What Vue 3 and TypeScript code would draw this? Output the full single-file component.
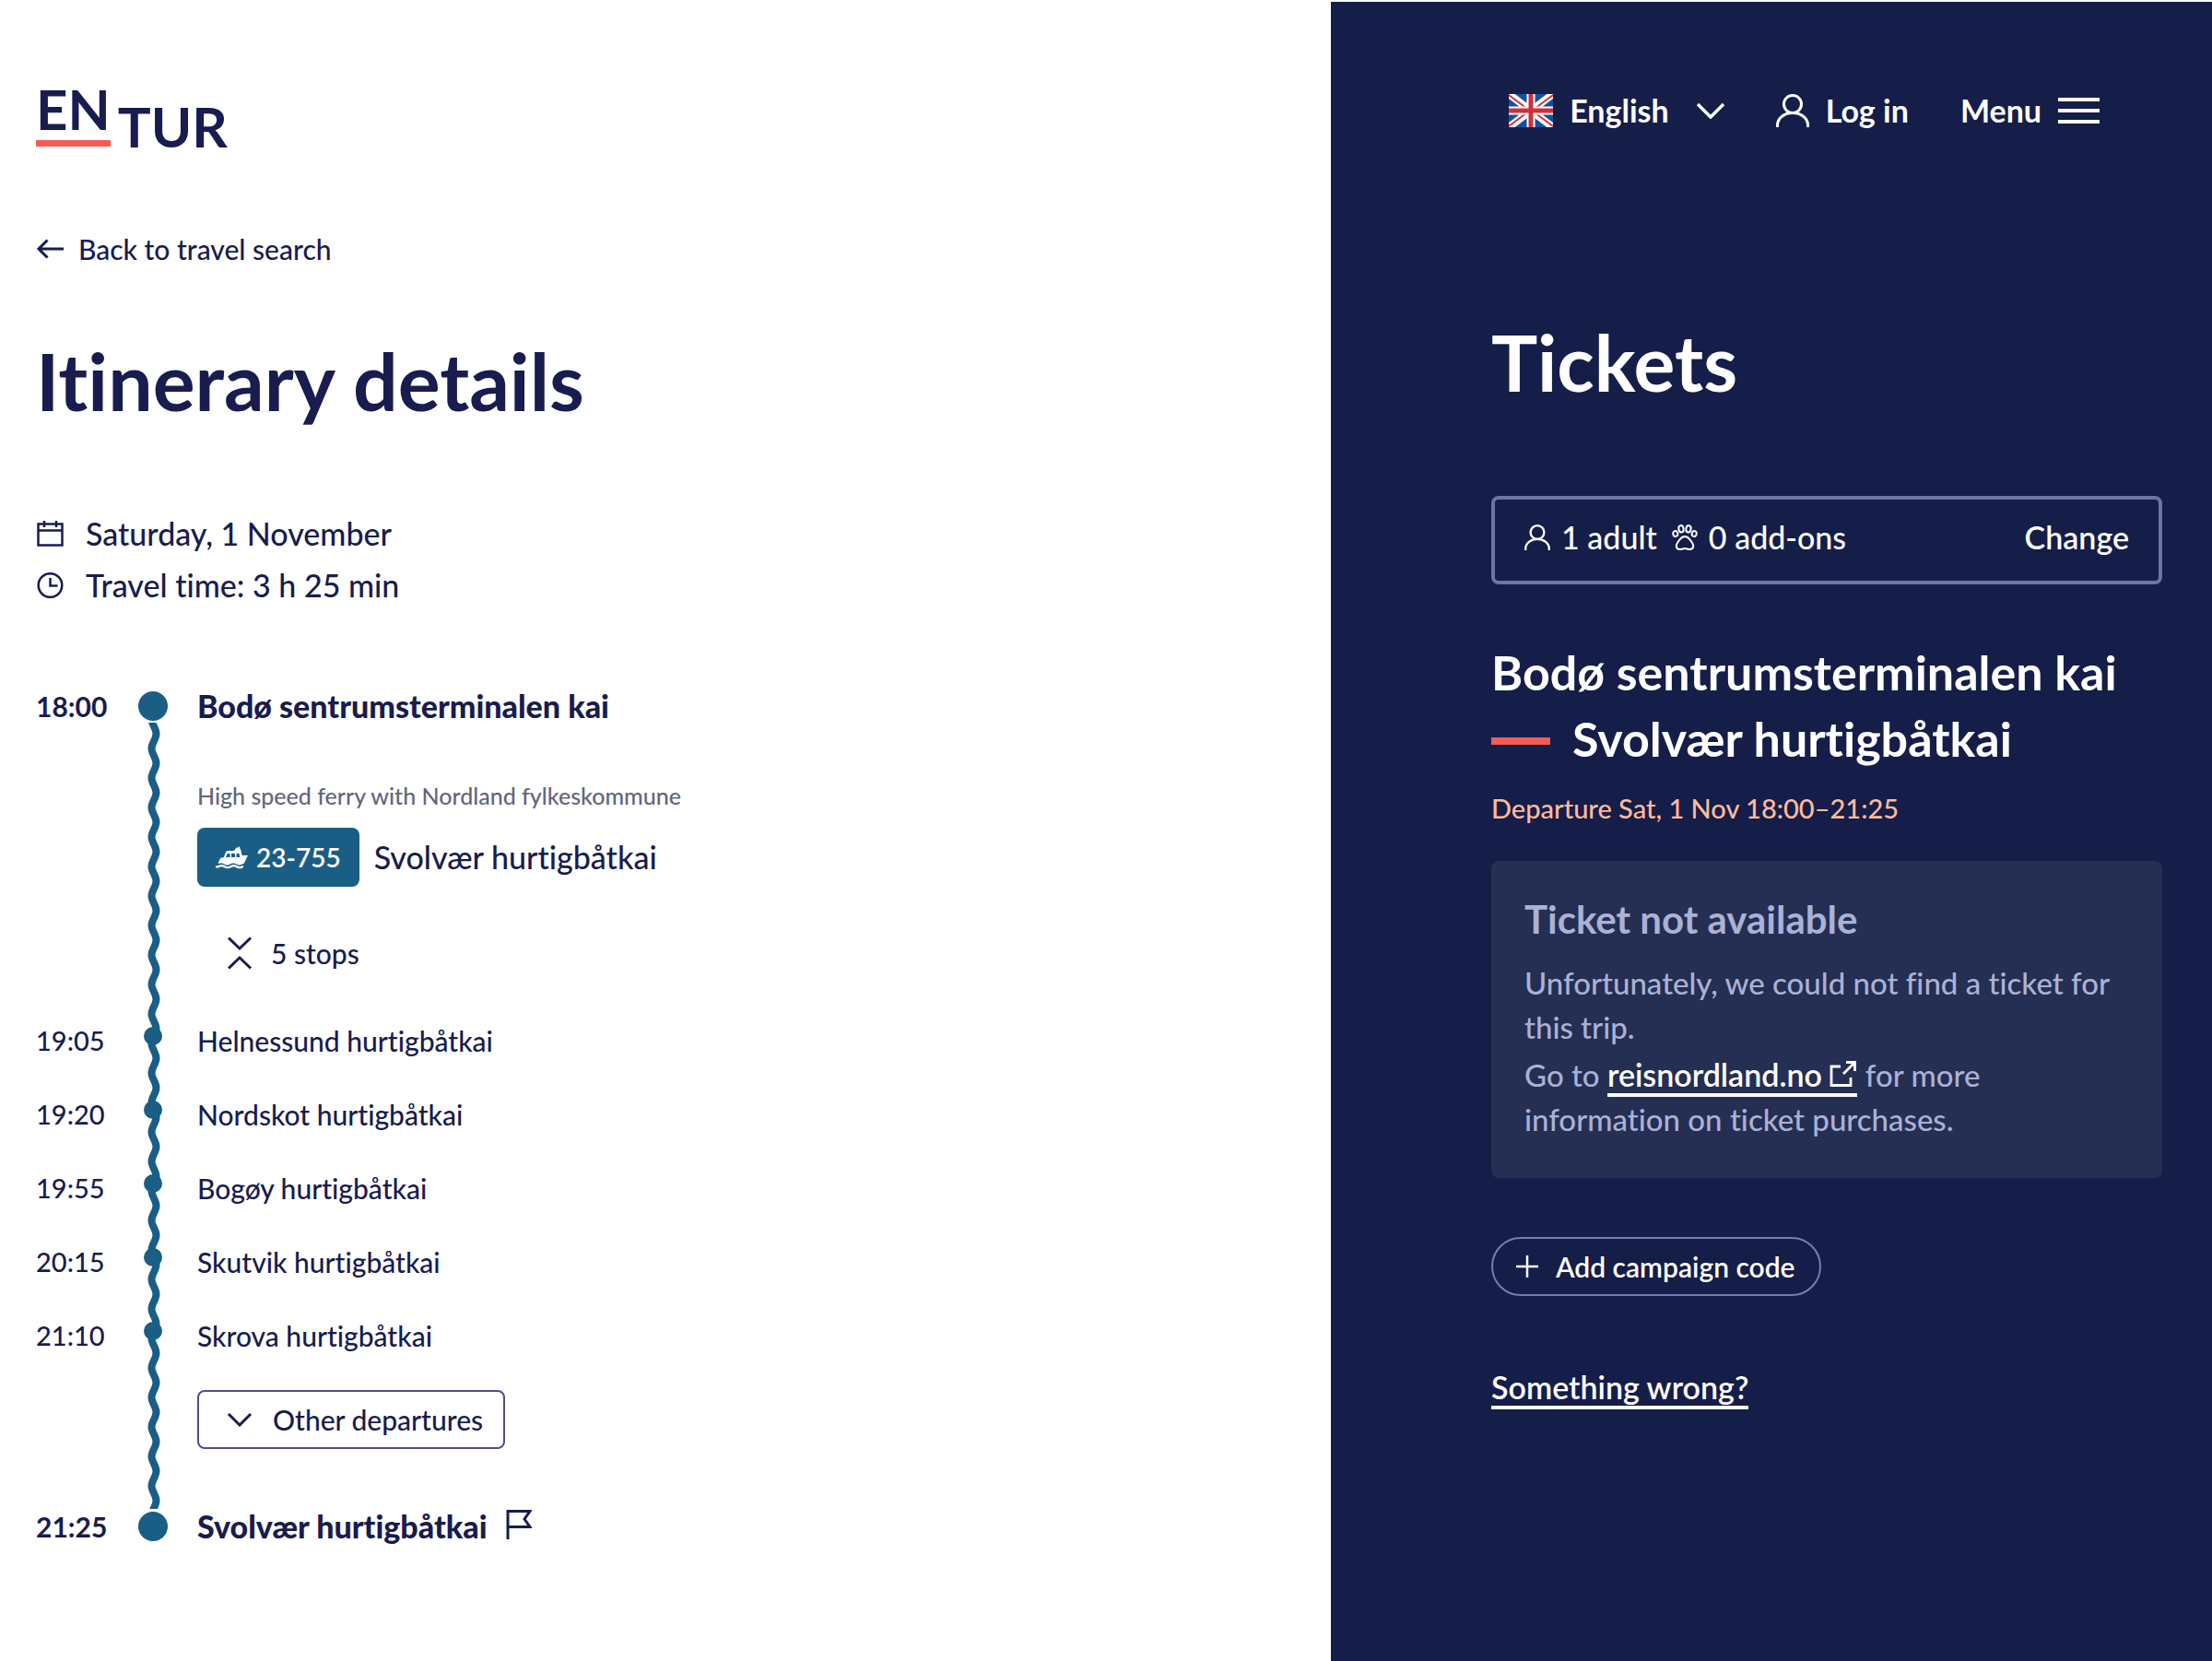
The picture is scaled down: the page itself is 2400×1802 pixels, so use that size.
<script setup lang="ts">
interface Stop {
  time: string
  name: string
}

const stops: Stop[] = [
  { time: '19:05', name: 'Helnessund hurtigbåtkai' },
  { time: '19:20', name: 'Nordskot hurtigbåtkai' },
  { time: '19:55', name: 'Bogøy hurtigbåtkai' },
  { time: '20:15', name: 'Skutvik hurtigbåtkai' },
  { time: '21:10', name: 'Skrova hurtigbåtkai' },
]
</script>

<template>
  <div class="page">
    <main class="itinerary">
      <a class="logo" href="#" aria-label="Entur">
        <span class="logo-en">EN</span><span class="logo-tur">TUR</span>
      </a>

      <a class="back" href="#">
        <svg width="30" height="30" viewBox="0 0 30 30" fill="none" stroke="currentColor" stroke-width="3">
          <path d="M30 15H3M12.500 5.500L3 15l9.500 9.500" />
        </svg>
        Back to travel search
      </a>

      <h1>Itinerary details</h1>

      <ul class="facts">
        <li>
          <svg width="30" height="28" viewBox="0 0 30 28" fill="none" stroke="currentColor" stroke-width="2.500">
            <path d="M2.500 3.500h26v23h-26zM2.500 10.500h26M9 0v7M22 0v7" />
          </svg>
          Saturday, 1 November
        </li>
        <li>
          <svg width="30" height="28" viewBox="0 0 30 28" fill="none" stroke="currentColor" stroke-width="2.500">
            <circle cx="15.500" cy="14" r="12.800" />
            <path d="M15.500 6v8.500h8" />
          </svg>
          Travel time: 3 h 25 min
        </li>
      </ul>

      <section class="leg" aria-label="Ferry">
        <svg class="wave" width="16" height="100%" aria-hidden="true">
          <defs>
            <pattern id="wave" width="16" height="32" patternUnits="userSpaceOnUse">
              <path
                d="M10.500 -20C10.500 -14 5.500 -10 5.500 -4S10.500 6 10.500 12S5.500 22 5.500 28S10.500 38 10.500 44"
                fill="none"
                stroke="#1a5e85"
                stroke-width="8"
              />
            </pattern>
          </defs>
          <rect width="16" height="100%" fill="url(#wave)" />
        </svg>

        <div class="row terminal">
          <time>18:00</time>
          <span class="marker"><i class="dot big"></i></span>
          <strong>Bodø sentrumsterminalen kai</strong>
        </div>

        <div class="ride">
          <p class="operator">High speed ferry with Nordland fylkeskommune</p>
          <div class="line">
            <span class="badge">
              <svg width="36" height="25" viewBox="0 0 36 25" fill="currentColor">
                <path
                  fill-rule="evenodd"
                  d="M2.500 18.500L5.500 12.500h3L11 6.500Q11.500 5 13 5h7l2.500-3.500h2l1-1.500 2 5 1 5H35l-4.500 9c-2 0-2.500 1.500-5 1.500s-3.500-2-6.500-2-3.500 2-6.500 2-3.500-2-6-2-2.500.5-4 0zM12.800 8l-1.600 4h4.300V8zM17 8v4h4V8zM22.500 8v4h3.800l-.8-4z"
                />
                <path
                  d="M0 22c2.500 1.200 3.500-.8 6.500-.8s3.500 2 6.500 2 3.500-2 6.500-2 3.500 2 6 2 3.500-1.200 4.500-1.200"
                  fill="none"
                  stroke="currentColor"
                  stroke-width="2.200"
                />
              </svg>
              23-755
            </span>
            <span class="headsign">Svolvær hurtigbåtkai</span>
          </div>
          <button class="toggle" type="button" aria-expanded="true">
            <svg width="28" height="36" viewBox="0 0 28 36" fill="none" stroke="currentColor" stroke-width="3">
              <path d="M2 1.500L14 13 26 1.500M2 34.500L14 23l12 11.500" />
            </svg>
            5 stops
          </button>
        </div>

        <ol class="stops">
          <li v-for="stop in stops" :key="stop.time" class="row stop">
            <time>{{ stop.time }}</time>
            <span class="marker"><i class="dot"></i></span>
            <span>{{ stop.name }}</span>
          </li>
        </ol>

        <button class="departures" type="button">
          <svg width="28" height="16" viewBox="0 0 28 16" fill="none" stroke="currentColor" stroke-width="3">
            <path d="M2 2l12 12L26 2" />
          </svg>
          Other departures
        </button>

        <div class="row terminal">
          <time>21:25</time>
          <span class="marker"><i class="dot big"></i></span>
          <strong>Svolvær hurtigbåtkai</strong>
          <svg class="flag" width="28" height="36" viewBox="0 0 28 36" fill="none" stroke="currentColor" stroke-width="3">
            <path d="M2 32V1.500h24L20 10l6 8.500H2" />
          </svg>
        </div>
      </section>
    </main>

    <aside class="tickets">
      <nav class="nav">
        <button class="nav-item language" type="button">
          <svg width="48" height="36" viewBox="0 0 48 36">
            <path fill="#1351a0" d="M0 0h48v36H0z" />
            <path stroke="#fff" stroke-width="8" d="M0 0l48 36M48 0L0 36" />
            <path stroke="#d22f34" stroke-width="2" d="M0 1l20 15M48 1L28 16M0 35l20-15M48 35L28 20" />
            <path stroke="#fff" stroke-width="9" d="M24 0v36M0 18h48" />
            <path stroke="#d22f34" stroke-width="5" d="M24 0v36M0 18h48" />
          </svg>
          <span>English</span>
          <svg class="chevron" width="30" height="18" viewBox="0 0 30 18" fill="none" stroke="currentColor" stroke-width="3.500">
            <path d="M1 2l14 14L29 2" />
          </svg>
        </button>
        <a class="nav-item" href="#">
          <svg width="36" height="36" viewBox="0 0 36 36" fill="none" stroke="currentColor" stroke-width="3">
            <circle cx="18" cy="11" r="9.500" />
            <path d="M1.500 36v-2C1.500 26 9 20.500 18 20.500S34.500 26 34.500 34v2" />
          </svg>
          <span>Log in</span>
        </a>
        <button class="nav-item" type="button">
          <span>Menu</span>
          <svg width="45" height="28" viewBox="0 0 45 28" stroke="currentColor" stroke-width="4">
            <path d="M0 2h45M0 14h45M0 26h45" />
          </svg>
        </button>
      </nav>

      <h2 class="title">Tickets</h2>

      <button class="travellers" type="button">
        <svg width="28" height="28" viewBox="0 0 36 36" fill="none" stroke="currentColor" stroke-width="3">
          <circle cx="18" cy="11" r="9.500" />
          <path d="M1.500 36v-2C1.500 26 9 20.500 18 20.500S34.500 26 34.500 34v2" />
        </svg>
        <span class="count">1 adult</span>
        <svg width="28" height="28" viewBox="0 0 28 28" fill="none" stroke="currentColor" stroke-width="2">
          <ellipse cx="10" cy="4.800" rx="2.600" ry="3.700" transform="rotate(-10 10 4.800)" />
          <ellipse cx="18" cy="4.800" rx="2.600" ry="3.700" transform="rotate(10 18 4.800)" />
          <ellipse cx="3.800" cy="10" rx="2.500" ry="3" transform="rotate(-15 3.800 10)" />
          <ellipse cx="24.200" cy="10" rx="2.500" ry="3" transform="rotate(15 24.200 10)" />
          <path d="M14 13c-4 0-5 3-7.500 6-3 4-2 8 2.500 8 2 0 3-1 5-1s3 1 5 1c4.500 0 5.500-4 2.500-8-2.500-3-3.500-6-7.500-6z" />
        </svg>
        <span>0 add-ons</span>
        <span class="change">Change</span>
      </button>

      <h3 class="trip">
        Bodø sentrumsterminalen kai
        <span class="to">Svolvær hurtigbåtkai</span>
      </h3>
      <p class="departure">Departure Sat, 1 Nov 18:00–21:25</p>

      <section class="notice">
        <h4>Ticket not available</h4>
        <p>Unfortunately, we could not find a ticket for this trip.</p>
        <p>
          Go to
          <a href="#">reisnordland.no <svg width="30" height="28" viewBox="0 0 30 28" fill="none" stroke="currentColor" stroke-width="2.800">
            <path d="M12 6H2v20.500h21V18M18 1.500h9.500V11M27.500 1.500L15 14" />
          </svg></a>
          for more information on ticket purchases.
        </p>
      </section>

      <button class="campaign" type="button">
        <svg width="26" height="26" viewBox="0 0 26 26" stroke="currentColor" stroke-width="2.500">
          <path d="M13 1v24M1 13h24" />
        </svg>
        Add campaign code
      </button>

      <a class="help" href="#">Something wrong?</a>
    </aside>
  </div>
</template>

<style>
body {
  margin: 0;
  background: #fff;
}
</style>

<style scoped>
.page {
  display: grid;
  grid-template-columns: 361fr 239fr;
  min-height: 100vh;
  color: #181c4f;
  font: 500 30px/40px Lato, 'Open Sans', sans-serif;
  font-variant-ligatures: none;
}

h1,
h2,
h3,
h4,
p,
ul,
ol {
  margin: 0;
  padding: 0;
}

li {
  list-style: none;
}

a {
  color: inherit;
  text-decoration: none;
}

button {
  background: none;
  border: 0;
  padding: 0;
  color: inherit;
  font: inherit;
  font-variant-ligatures: inherit;
  cursor: pointer;
}

svg {
  flex: none;
}

.itinerary {
  display: flex;
  flex-direction: column;
  align-items: flex-start;
  padding: 98px 39px 0;
}

.logo {
  display: flex;
  gap: 8px;
  height: 62px;
  font-weight: 700;
  font-size: 60px;
  line-height: 40px;
}

.logo-en {
  height: 54px;
  border-bottom: 7px solid #f45b55;
}

.logo-tur {
  padding-top: 19px;
}

.back {
  display: flex;
  align-items: center;
  gap: 16px;
  margin-top: 90px;
}

h1 {
  margin-top: 75px;
  font-weight: 700;
  font-size: 86px;
  line-height: 96px;
}

.facts {
  margin-top: 90px;
  font-size: 34px;
  line-height: 56px;
}

.facts li {
  display: flex;
  align-items: center;
  gap: 24px;
}

.leg {
  position: relative;
  align-self: stretch;
  margin-top: 79px;
}

.wave {
  position: absolute;
  top: 42px;
  left: 120px;
  height: calc(100% - 85px);
}

.row {
  display: flex;
  align-items: center;
}

.row time {
  width: 111px;
}

.marker {
  position: relative;
  display: flex;
  justify-content: center;
  width: 32px;
  margin-right: 32px;
}

.dot {
  width: 20px;
  height: 20px;
  border-radius: 50%;
  background: #1a5e85;
}

.dot.big {
  width: 32px;
  height: 32px;
}

.terminal {
  line-height: 48px;
  font-weight: 700;
}

.terminal strong {
  font-size: 34px;
}

.flag {
  margin-left: 20px;
}

.ride {
  display: flex;
  flex-direction: column;
  align-items: flex-start;
  margin: 57px 0 35px 175px;
}

.operator {
  color: #65657a;
  font-size: 25px;
  line-height: 32px;
}

.line {
  display: flex;
  align-items: center;
  gap: 16px;
  margin: 19px 0 52px;
}

.badge {
  display: flex;
  align-items: center;
  gap: 8px;
  box-sizing: border-box;
  height: 64px;
  padding: 0 20px;
  border-radius: 8px;
  background: #1a5e85;
  color: #fff;
  font-weight: 600;
  font-size: 28px;
}

.headsign {
  font-size: 34px;
}

.toggle {
  display: flex;
  align-items: center;
  gap: 20px;
  padding-left: 32px;
}

.stop {
  height: 80px;
}

.stop time {
  font-size: 29px;
}

.stop .marker {
  padding-bottom: 10px;
}

.departures {
  display: flex;
  align-items: center;
  gap: 22px;
  height: 64px;
  margin: 19px 0 60px 175px;
  padding: 0 22px 0 30px;
  border: 2px solid #4c4f86;
  border-radius: 8px;
}

.tickets {
  display: flex;
  flex-direction: column;
  align-items: flex-start;
  margin-top: 2px;
  padding: 92px 54px 80px 174px;
  background: #151d49;
  color: #fff;
}

.nav {
  display: flex;
  align-self: flex-end;
  margin-right: 68px;
  gap: 56px;
  font-weight: 700;
  font-size: 34px;
  line-height: 52px;
}

.nav-item {
  display: flex;
  align-items: center;
  gap: 18px;
}

.chevron {
  margin-left: 12px;
}

.title {
  margin-top: 199px;
  font-weight: 700;
  font-size: 84px;
  line-height: 96px;
}

.travellers {
  display: flex;
  align-items: center;
  align-self: stretch;
  gap: 12px;
  height: 96px;
  margin-top: 97px;
  padding: 0 32px 6px;
  border: 4px solid #6e74a5;
  border-radius: 8px;
  font-size: 34px;
}

.count {
  margin-right: 4px;
}

.change {
  margin-left: auto;
  font-weight: 600;
}

.trip {
  margin-top: 59px;
  font-weight: 700;
  font-size: 52px;
  line-height: 72px;
}

.to {
  display: flex;
  align-items: center;
  gap: 24px;
}

.to::before {
  content: '';
  width: 64px;
  height: 8px;
  margin-top: 6px;
  background: #f45b55;
}

.departure {
  margin-top: 20px;
  color: #ffbc9e;
  font-size: 29px;
}

.notice {
  align-self: stretch;
  margin-top: 37px;
  padding: 39px 34px 40px 36px;
  border-radius: 8px;
  background: #252e53;
  color: #aab2d5;
  font-size: 33px;
  line-height: 48px;
}

.notice h4 {
  margin-bottom: 21px;
  font-weight: 700;
  font-size: 42px;
}

.notice p + p {
  margin-top: 4px;
}

.notice a {
  color: #fff;
  border-bottom: 4px solid #fff;
  font-weight: 600;
  font-size: 34px;
}

.campaign {
  display: flex;
  align-items: center;
  gap: 18px;
  height: 64px;
  margin-top: 64px;
  padding: 0 26px 0 24px;
  border: 2px solid #777dae;
  border-radius: 32px;
  font-weight: 600;
}

.help {
  margin-top: 79px;
  border-bottom: 4px solid #fff;
  font-weight: 600;
  font-size: 34px;
}
</style>
